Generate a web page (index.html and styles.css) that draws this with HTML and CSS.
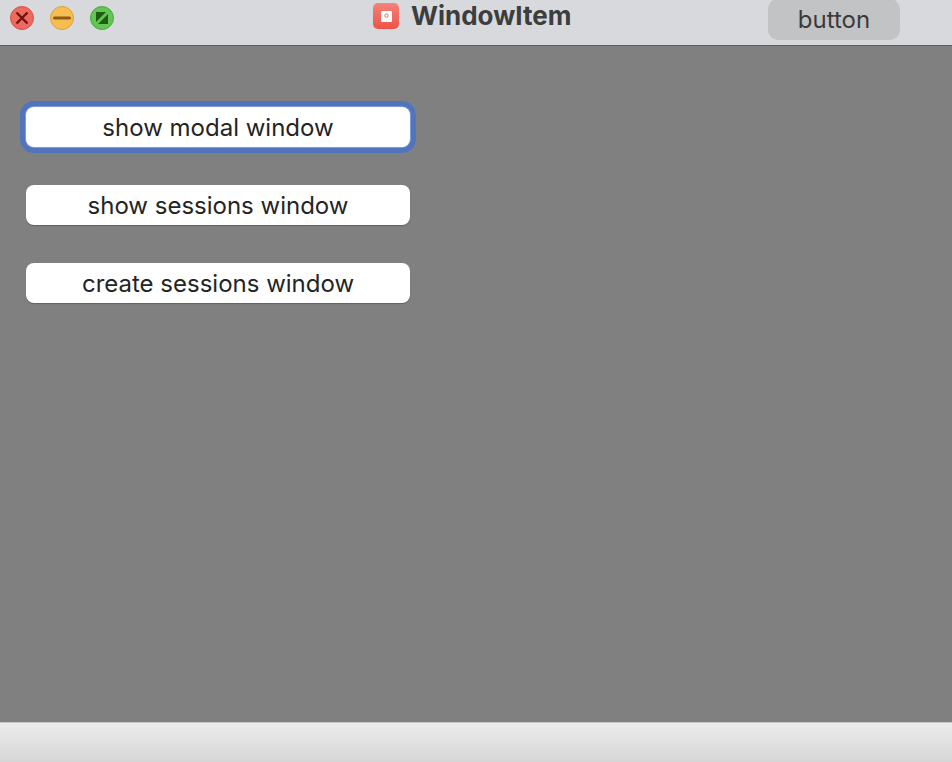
FILE: index.html
```html
<!DOCTYPE html>
<html lang="en">
<head>
<meta charset="utf-8">
<title>WindowItem</title>
<link rel="stylesheet" href="styles.css">
</head>
<body>
<div class="window">
  <header class="titlebar">
    <div class="lights">
      <svg class="light" viewBox="0 0 24 24"><circle cx="12" cy="12" r="11.5" fill="#ee6a5f" stroke="#d5534a"/><path d="M6.5 6.5L17.5 17.5M17.5 6.5L6.5 17.5" stroke="#6b1310" stroke-width="2.4" fill="none"/></svg>
      <svg class="light" viewBox="0 0 24 24"><circle cx="12" cy="12" r="11.5" fill="#f6bd50" stroke="#dea13a"/><path d="M4.5 12H19.5" stroke="#8c5a12" stroke-width="3" stroke-linecap="round" fill="none"/></svg>
      <svg class="light" viewBox="0 0 24 24"><circle cx="12" cy="12" r="11.5" fill="#62c554" stroke="#4ba83f"/><path d="M6 6H16L6 16ZM18 8V18H8Z" fill="#1f5c14"/></svg>
    </div>
    <div class="title">
      <svg class="app-icon" viewBox="0 0 26 26"><defs><linearGradient id="g" x1="0" y1="0" x2="0" y2="1"><stop offset="0" stop-color="#f4837a"/><stop offset="1" stop-color="#ee5248"/></linearGradient></defs><rect width="26" height="26" rx="5" fill="url(#g)"/><rect x="8" y="8" width="11" height="11" rx="1" fill="#fff"/><circle cx="13.5" cy="12.6" r="1.7" fill="none" stroke="#e8675d" stroke-width="1"/></svg>
      <span class="title-text">WindowItem</span>
    </div>
    <div class="top-button">button</div>
  </header>
  <main class="content">
    <button class="btn focused">show modal window</button>
    <button class="btn">show sessions window</button>
    <button class="btn">create sessions window</button>
  </main>
  <footer class="statusbar"></footer>
</div>
</body>
</html>
```
FILE: styles.css
```css
html, body {
  margin: 0;
  padding: 0;
  height: 100%;
  overflow: hidden;
}
body {
  font-family: "Inter", "Liberation Sans", sans-serif;
}
.window {
  display: flex;
  flex-direction: column;
  height: 762px;
  width: 952px;
}
.titlebar {
  flex: 0 0 46px;
  box-sizing: border-box;
  display: flex;
  align-items: flex-start;
  background: #d8d9dc;
  border-bottom: 1px solid #5e5e5e;
  height: 47px;
  padding-left: 10px;
  overflow: hidden;
}
.lights {
  display: flex;
  gap: 16px;
  padding-top: 6px;
}
.light {
  width: 24px;
  height: 24px;
  display: block;
}
.title {
  display: flex;
  align-items: center;
  gap: 12px;
  margin-left: 259px;
  padding-top: 3px;
  height: 26px;
}
.app-icon {
  width: 26px;
  height: 26px;
  display: block;
}
.title-text {
  font-size: 26px;
  font-weight: 700;
  color: #3c3d3e;
  line-height: 26px;
}
.top-button {
  margin-left: auto;
  margin-right: 52px;
  margin-top: -1px;
  width: 132px;
  height: 41px;
  display: flex;
  align-items: center;
  justify-content: center;
  background: #c2c3c5;
  border-radius: 10px;
  color: #3a3a3b;
  font-size: 24px;
}
.content {
  flex: 1;
  background: #808080;
  display: flex;
  flex-direction: column;
  align-items: flex-start;
  gap: 38px;
  padding: 61px 0 0 26px;
}
.btn {
  width: 384px;
  height: 40px;
  border: 0;
  border-radius: 8px;
  padding: 0;
  background: #fff;
  color: #242424;
  font-family: inherit;
  font-size: 24px;
  box-shadow: 0 1px 1px rgba(0, 0, 0, 0.25);
}
.btn.focused {
  box-shadow: 0 0 0 1px #7e9bd6, 0 0 0 6px #5175bd;
}
.statusbar {
  flex: 0 0 40px;
  box-sizing: border-box;
  border-top: 1px solid #c8c8c8;
  background: linear-gradient(#ececec, #d6d6d6);
}
```
